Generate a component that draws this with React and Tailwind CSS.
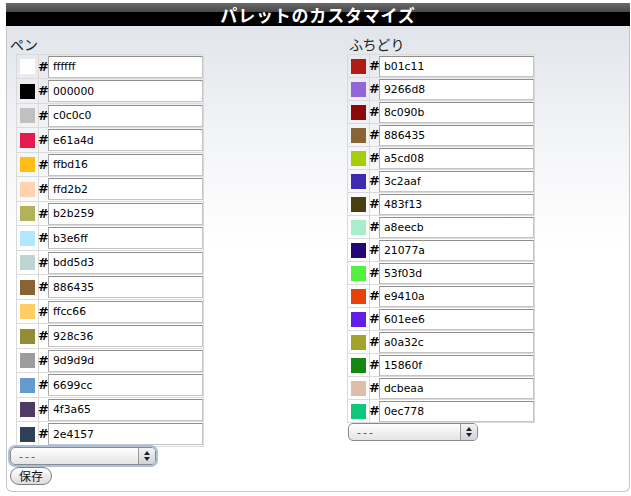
import React from 'react';

const penColors = [
  'ffffff', '000000', 'c0c0c0', 'e61a4d', 'ffbd16', 'ffd2b2', 'b2b259', 'b3e6ff',
  'bdd5d3', '886435', 'ffcc66', '928c36', '9d9d9d', '6699cc', '4f3a65', '2e4157',
];

const edgeColors = [
  'b01c11', '9266d8', '8c090b', '886435', 'a5cd08', '3c2aaf', '483f13', 'a8eecb',
  '21077a', '53f03d', 'e9410a', '601ee6', 'a0a32c', '15860f', 'dcbeaa', '0ec778',
];

const ColorRow = ({ hex, rowClass, inputClass }) => (
  <div className={`flex border-b border-[#dadada] ${rowClass}`}>
    <div className="flex w-[22px] items-center justify-center border-r border-[#dadada]">
      {/* swatch colour comes from the data */}
      <span className="block h-[15px] w-[15px]" style={{ backgroundColor: `#${hex}` }} />
    </div>
    <div className="flex w-[9px] items-center justify-center font-['DejaVu_Sans',sans-serif] text-[13px] font-bold text-black">
      #
    </div>
    <div className="flex flex-1 items-center border-r border-[#dadada]">
      <input
        defaultValue={hex}
        className={`w-full border border-[#c4c4c4] border-t-[#8e8e8e] border-l-[#ababab] bg-white px-[4px] font-['DejaVu_Sans',sans-serif] text-[10.8px] text-black outline-none ${inputClass}`}
      />
    </div>
  </div>
);

const Select = ({ className }) => (
  <div className={`flex h-[18px] items-stretch overflow-hidden rounded-[5px] border border-[#8a8a8a] bg-[linear-gradient(to_bottom,#ffffff,#e4e4e4)] ${className}`}>
    <span className="flex flex-1 items-center pl-[8px] font-['DejaVu_Sans',sans-serif] text-[11px] leading-none tracking-[2px] text-[#555]">---</span>
    <span className="flex w-[17px] flex-col items-center justify-center gap-[2px] border-l border-[#9a9a9a] bg-[linear-gradient(to_bottom,#f4f4f4,#cfd3d9)]">
      <svg width="6" height="4" viewBox="0 0 6 4"><path d="M3 0L6 4H0z" fill="#222" /></svg>
      <svg width="6" height="4" viewBox="0 0 6 4"><path d="M0 0h6L3 4z" fill="#222" /></svg>
    </span>
  </div>
);

export default function App() {
  return (
    <div className="h-[496px] w-[631px] bg-white pt-[3px] font-['Noto_Sans_CJK_JP',sans-serif]">
      <div className="ml-[6px] mr-[1px]">
        <div className="flex h-[23px] items-center justify-center bg-[linear-gradient(to_bottom,#6a6a6a_0%,#4a4a4a_38%,#000_40%,#000_100%)] text-[17px] font-bold leading-none tracking-[0.8px] text-white">
          パレットのカスタマイズ
        </div>
        <div className="flex h-[466px] rounded-b-[6px] border-x border-b border-[#c6c6c6] bg-[linear-gradient(to_bottom,#e1e5eb_0px,#f4f5f7_120px,#ffffff_220px)] pl-[3px] pt-[8px]">
          <div className="w-[337px]">
            <div className="h-[20px] text-[14px] leading-[20px] text-[#222]">ペン</div>
            <div className="ml-[6px] w-[188px] border-l border-t border-[#dadada]">
              {penColors.map((hex, i) => (
                <ColorRow
                  key={hex}
                  hex={hex}
                  rowClass={i % 2 ? 'h-[25px]' : 'h-[24px]'}
                  inputClass="h-[22px]"
                />
              ))}
            </div>
            <Select className="w-[146px] shadow-[0_0_0_2px_#a9c1dd]" />
            <button className="mt-[2px] flex h-[18px] w-[42px] items-center justify-center rounded-full border border-[#7f7f7f] bg-[linear-gradient(to_bottom,#ffffff,#dcdcdc)] text-[12px] leading-none text-[#111]">
              保存
            </button>
          </div>
          <div className="w-[190px]">
            <div className="ml-[2px] h-[20px] text-[14px] leading-[20px] text-[#222]">ふちどり</div>
            <div className="w-[188px] border-l border-t border-[#dadada]">
              {edgeColors.map((hex) => (
                <ColorRow key={hex} hex={hex} rowClass="h-[23px]" inputClass="h-[21px]" />
              ))}
            </div>
            <Select className="ml-[1px] w-[130px]" />
          </div>
        </div>
      </div>
    </div>
  );
}
